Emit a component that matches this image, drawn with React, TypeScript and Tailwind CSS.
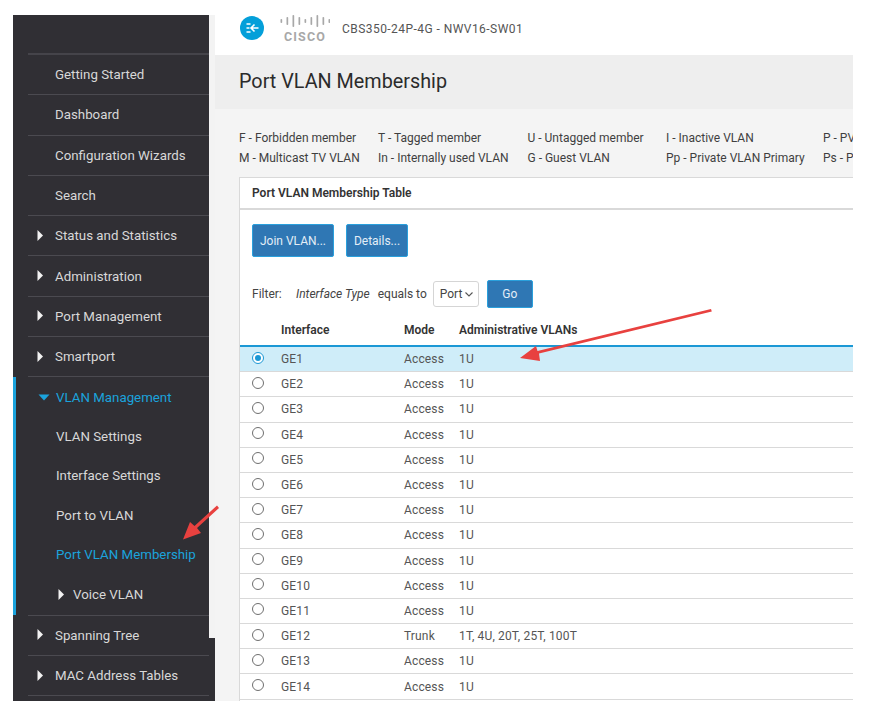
import React from 'react';

const topItems = ['Getting Started', 'Dashboard', 'Configuration Wizards', 'Search'];
const closedItems = ['Status and Statistics', 'Administration', 'Port Management', 'Smartport'];
const subItems = ['VLAN Settings', 'Interface Settings', 'Port to VLAN', 'Port VLAN Membership'];

const ports = [
  { name: 'GE1', mode: 'Access', vlans: '1U' },
  { name: 'GE2', mode: 'Access', vlans: '1U' },
  { name: 'GE3', mode: 'Access', vlans: '1U' },
  { name: 'GE4', mode: 'Access', vlans: '1U' },
  { name: 'GE5', mode: 'Access', vlans: '1U' },
  { name: 'GE6', mode: 'Access', vlans: '1U' },
  { name: 'GE7', mode: 'Access', vlans: '1U' },
  { name: 'GE8', mode: 'Access', vlans: '1U' },
  { name: 'GE9', mode: 'Access', vlans: '1U' },
  { name: 'GE10', mode: 'Access', vlans: '1U' },
  { name: 'GE11', mode: 'Access', vlans: '1U' },
  { name: 'GE12', mode: 'Trunk', vlans: '1T, 4U, 20T, 25T, 100T' },
  { name: 'GE13', mode: 'Access', vlans: '1U' },
  { name: 'GE14', mode: 'Access', vlans: '1U' },
];

const legend = [
  ['F - Forbidden member', 'T - Tagged member', 'U - Untagged member', 'I - Inactive VLAN', 'P - PV'],
  ['M - Multicast TV VLAN', 'In - Internally used VLAN', 'G - Guest VLAN', 'Pp - Private VLAN Primary', 'Ps - P'],
];

const Caret = ({ down = false }: { down?: boolean }) =>
  down ? (
    <svg width="12" height="7" viewBox="0 0 12 7" className="shrink-0">
      <path d="M0.5 0.5h11L6 6.5z" fill="#1ba3dc" />
    </svg>
  ) : (
    <svg width="6" height="11" viewBox="0 0 6 11" className="shrink-0">
      <path d="M0.5 0v11L6 5.5z" fill="#f2f2f2" />
    </svg>
  );

const NavRow = ({ label, caret = false }: { label: string; caret?: boolean }) => (
  <div className="flex h-[40.3px] items-center border-b border-[#4b4a50] pt-[1px]">
    <div className="flex w-[27px] pb-[2px] pl-[9px]">{caret && <Caret />}</div>
    <span>{label}</span>
  </div>
);

const CiscoLogo = () => {
  const bars = [4, 8, 12, 8, 4, 8, 12, 8, 4];
  return (
    <div className="flex w-[50px] flex-col items-center">
      <svg width="50" height="12" viewBox="0 0 50 12" className="shrink-0">
        {bars.map((h, i) => (
          <rect key={i} x={i * 6 + 0.5} y={6 - h / 2} width="1.7" height={h} rx="0.8" fill="#a8a8a8" />
        ))}
      </svg>
      <span className="mt-[5px] text-[12.5px] leading-[10px] font-bold tracking-[1.1px] text-[#a8a8a8]">CISCO</span>
    </div>
  );
};

const Radio = ({ on = false }: { on?: boolean }) =>
  on ? (
    <span className="flex h-[12px] w-[12px] items-center justify-center rounded-full border border-[#1b98d5] bg-white">
      <span className="h-[6px] w-[6px] rounded-full bg-[#1b98d5]" />
    </span>
  ) : (
    <span className="h-[12px] w-[12px] rounded-full border border-[#6f6f6f] bg-white" />
  );

export default function App() {
  return (
    <div className="relative h-[726px] w-[888px] overflow-hidden bg-white pt-[15px] pl-[13px] font-['Roboto',sans-serif]">
      <div className="flex h-[686px] w-[840px] overflow-hidden">
        {/* sidebar */}
        <div className="relative w-[202px] shrink-0 bg-[#302f34] pr-[6px] pl-[15px] text-[13.3px] text-[#d8d8d8]">
          <div className="h-[40px] border-b-2 border-[#45444a]" />
          {topItems.map((t) => (
            <NavRow key={t} label={t} />
          ))}
          {closedItems.map((t) => (
            <NavRow key={t} label={t} caret />
          ))}
          <div className="-ml-[15px] border-l-[3px] border-[#1ba3dc] pl-[15px]">
            <div className="flex h-[40px] items-center pt-[1px]">
              <div className="flex w-[25px] pl-[7px]">
                <Caret down />
              </div>
              <span className="text-[#1ba3dc]">VLAN Management</span>
            </div>
            {subItems.map((t, i) => (
              <div key={t} className={`flex h-[39.3px] items-center pl-[25px] ${i === 3 ? 'text-[#1ba3dc]' : ''}`}>
                {t}
              </div>
            ))}
            <div className="flex h-[40px] items-center pl-[27px]">
              <Caret />
              <span className="ml-[9px]">Voice VLAN</span>
            </div>
          </div>
          <div className="border-t border-[#4b4a50]">
            <NavRow label="Spanning Tree" caret />
            <NavRow label="MAC Address Tables" caret />
          </div>
          {/* light strip cut into the sidebar edge */}
          <div className="absolute top-0 right-0 h-[623px] w-[6px] bg-[#f3f3f3]" />
        </div>

        {/* main */}
        <div className="flex min-w-0 flex-1 flex-col overflow-hidden bg-[#f4f4f4]">
          <div className="flex h-[40px] shrink-0 items-start bg-white pl-[25px]">
            <svg width="24" height="24" viewBox="0 0 24 24" className="mt-[1px] shrink-0">
              <circle cx="12" cy="12" r="12" fill="#049fd9" />
              <path d="M6.5 8h4M6.5 12h3M6.5 16h4" stroke="#fff" strokeWidth="1.5" fill="none" />
              <path d="M18.5 12h-7M14.5 8.5 11 12l3.5 3.5" stroke="#fff" strokeWidth="1.6" fill="none" />
            </svg>
            <div className="ml-[16px]">
              <CiscoLogo />
            </div>
            <span className="mt-[5px] ml-[12px] text-[12px] tracking-[0.45px] text-[#555]">CBS350-24P-4G - NWV16-SW01</span>
          </div>
          <div className="flex h-[54px] shrink-0 items-center bg-[#eeeeee] pl-[24px] text-[19.8px] text-[#2b2b2b]">
            Port VLAN Membership
          </div>
          <div className="flex flex-1 flex-col pl-[24px]">
            <div className="flex h-[68px] shrink-0 flex-col justify-center pt-[10px] text-[12px] text-[#3f3f3f]">
              {legend.map((row, r) => (
                <div key={r} className="grid h-[20px] grid-cols-[139px_149.5px_138.5px_157px_40px] items-center whitespace-nowrap">
                  {row.map((t) => (
                    <span key={t}>{t}</span>
                  ))}
                </div>
              ))}
            </div>

            <div className="w-[700px] flex-1 border-t border-l border-[#d9d9d9] bg-white">
              <div className="flex h-[32px] items-center border-b-2 border-[#d9d9d9] pl-[12px] text-[12px] font-semibold text-[#333]">
                Port VLAN Membership Table
              </div>
              <div className="mt-[14px] flex gap-[12px] pl-[12px] text-[12px] text-[#e3eef7]">
                <button className="h-[33px] w-[82px] rounded-[2px] border border-[#2aa0dc] bg-[#2f77b4]">Join VLAN...</button>
                <button className="h-[33px] w-[62px] rounded-[2px] border border-[#2aa0dc] bg-[#2f77b4]">Details...</button>
              </div>
              <div className="mt-[23px] flex h-[28px] items-center pl-[12px] text-[12px] text-[#444]">
                <span className="w-[44px]">Filter:</span>
                <span className="italic">Interface Type</span>
                <span className="ml-[8px]">equals to</span>
                <div className="ml-[6px] flex h-[26px] w-[46px] items-center justify-between rounded-[3px] border border-[#d5d5d5] pr-[5px] pl-[6px]">
                  <span>Port</span>
                  <svg width="8" height="5" viewBox="0 0 8 5">
                    <path d="M0.5 0.5 4 4l3.5-3.5" stroke="#555" strokeWidth="1.1" fill="none" />
                  </svg>
                </div>
                <button className="ml-[8px] h-[28px] w-[46px] rounded-[2px] border border-[#2aa0dc] bg-[#2f77b4] text-[#e3eef7]">Go</button>
              </div>
              <div className="mt-[10px] flex h-[27px] items-center pb-[3px] text-[12px] font-semibold text-[#333]">
                <span className="w-[41px]" />
                <span className="w-[123px]">Interface</span>
                <span className="w-[55px]">Mode</span>
                <span>Administrative VLANs</span>
              </div>
              <div className="border-t-2 border-[#1b98d5] text-[12px] tracking-[0.15px] text-[#555]">
                {ports.map((p, i) => (
                  <div
                    key={p.name}
                    className={`flex h-[25.2px] items-center border-b border-[#d9d9d9] ${i === 0 ? 'bg-[#cfedf9]' : 'bg-white'}`}
                  >
                    <span className="flex w-[41px] pl-[12px]">
                      <span className="mb-[3px] flex">
                        <Radio on={i === 0} />
                      </span>
                    </span>
                    <span className="w-[123px]">{p.name}</span>
                    <span className="w-[55px]">{p.mode}</span>
                    <span>{p.vlans}</span>
                  </div>
                ))}
              </div>
            </div>
          </div>
        </div>
      </div>

      {/* annotation arrows */}
      <svg width="888" height="726" viewBox="0 0 888 726" className="pointer-events-none absolute top-0 left-0">
        <path d="M711 309 L711.8 311.5 L539 353.5 L540 361 L520 358 L536 346 L537.5 351 Z" fill="#e8413f" />
        <path d="M217 505.5 L219 508 L197 528 L201 533 L183 539.5 L190 522 L194.5 526 Z" fill="#e8413f" />
      </svg>
    </div>
  );
}
